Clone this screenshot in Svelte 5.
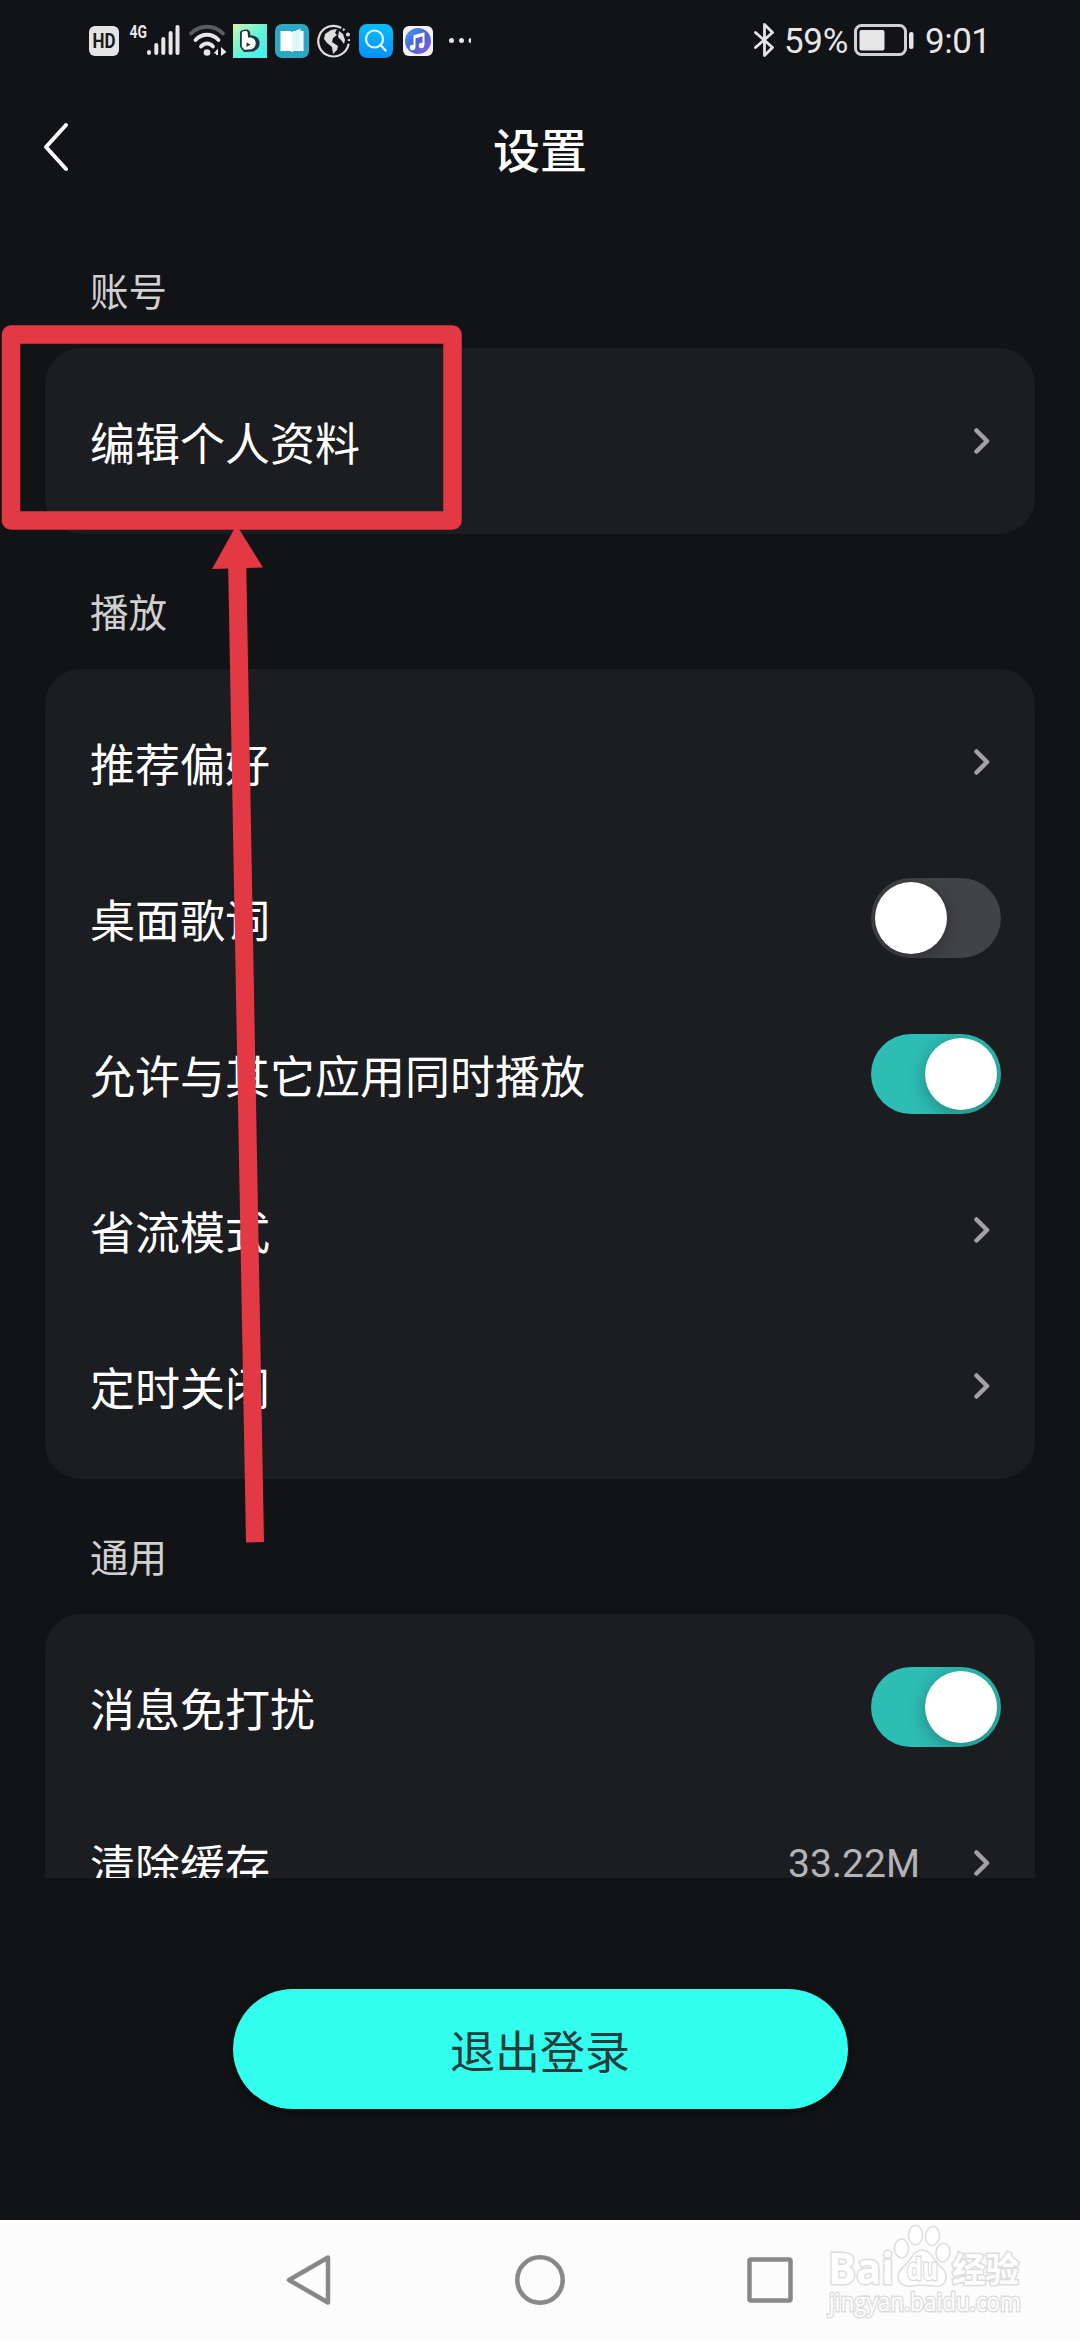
<script lang="ts">
    type Row = { label: string; kind: "link" | "switch"; on?: boolean; value?: string };
    type Section = { title: string; rows: Row[] };

    let sections: Section[] = [
        {
            title: "账号",
            rows: [{ label: "编辑个人资料", kind: "link" }],
        },
        {
            title: "播放",
            rows: [
                { label: "推荐偏好", kind: "link" },
                { label: "桌面歌词", kind: "switch", on: false },
                { label: "允许与其它应用同时播放", kind: "switch", on: true },
                { label: "省流模式", kind: "link" },
                { label: "定时关闭", kind: "link" },
            ],
        },
        {
            title: "通用",
            rows: [
                { label: "消息免打扰", kind: "switch", on: true },
                { label: "清除缓存", kind: "link", value: "33.22M" },
            ],
        },
    ];

    function toggle(row: Row) {
        row.on = !row.on;
        sections = sections;
    }
</script>

<div class="screen">
    <div class="statusBar">
        <svg class="statusIcons" width="400" height="40" viewBox="80 20 400 40">
            <defs>
                <linearGradient id="mint" x1="0" y1="0" x2="1" y2="1">
                    <stop offset="0" stop-color="#d3f6ac" />
                    <stop offset="0.5" stop-color="#66f3d8" />
                    <stop offset="1" stop-color="#3deef0" />
                </linearGradient>
                <linearGradient id="sky" x1="0" y1="0" x2="0" y2="1">
                    <stop offset="0" stop-color="#08bdfb" />
                    <stop offset="1" stop-color="#0a8ff8" />
                </linearGradient>
                <linearGradient id="violet" x1="0" y1="0" x2="1" y2="1">
                    <stop offset="0" stop-color="#4aa0ee" />
                    <stop offset="0.5" stop-color="#4a63d8" />
                    <stop offset="1" stop-color="#8d63dc" />
                </linearGradient>
            </defs>

            <!-- HD voice -->
            <rect x="89" y="26" width="30" height="30" rx="6" fill="#e4e4e4" />
            <text x="104" y="48" class="hd" text-anchor="middle" textLength="23" lengthAdjust="spacingAndGlyphs">HD</text>

            <!-- signal -->
            <text x="129.5" y="38" class="gen" textLength="17.5" lengthAdjust="spacingAndGlyphs">4G</text>
            <path d="M149 52v1M156.300 45v8M163.300 39v14M170.600 33v20M177.500 27v26" stroke="#e6e6e6" stroke-width="4" stroke-linecap="round" />

            <!-- wifi -->
            <g fill="none" stroke-linecap="round" stroke-width="3.800">
                <path d="M191 33.500C200 24.500 214 24.500 223 33.500" stroke="#5b5c5e" />
                <path d="M195.500 40C202 33 212 33 218.500 40" stroke="#e6e6e6" />
                <path d="M201 46.500C204.500 42.500 209.500 42.500 213 46.500" stroke="#e6e6e6" />
            </g>
            <circle cx="207" cy="52.500" r="3.300" fill="#e6e6e6" />
            <path d="M213.500 53.500l4.500-5v6.500h-2v-1.500zM221 47l5.500 5-5.500 4z" fill="#e6e6e6" />

            <!-- running apps -->
            <rect x="233" y="24" width="34" height="34" fill="url(#mint)" />
            <path d="M243.500 33.500l3-.5 1 5.500 5 .5c5 1.500 4.500 7.500 0 9l-7 .5-2-3z" fill="#1c3540" stroke="#1c3540" stroke-width="7" stroke-linejoin="round" />
            <path d="M243.500 33l2.500-.3.500 6.300 4.500.3c4 1 4 7 0 8.200l-6 .5-1.500-2z" fill="#fff" stroke="#fff" stroke-width="3.400" stroke-linejoin="round" />
            <path d="M246.500 42.500l4 2-4 2.500z" fill="#1c3540" />

            <rect x="275" y="24" width="34" height="34" rx="7" fill="#2ba8c4" />
            <path d="M280.500 31h10l1.500 1 1.500-1h10v20h-10l-1.500 1-1.500-1h-10z" fill="#fff" />
            <path d="M292 32.500l8.500-4V48l-8.500 4z" fill="#dff8f7" />

            <g fill="none" stroke="#dedede" stroke-width="2.200">
                <path d="M340.500 27.500a15.300 15.300 0 1 0 8 17" stroke-linecap="round" />
                <path d="M343 29a15 15 0 0 1 6 12" stroke-dasharray="2 4" />
            </g>
            <path d="M325 34l6-4 6-1-2 4 2 2-4 3-1 4 6 4-1 4-4 4-1-7-5-4-3-4z" fill="#dedede" />
            <path d="M339 31l4 3 2 6-1 4-3-4-3-3z" fill="#dedede" />
            <circle cx="348" cy="34.500" r="2" fill="#dedede" />

            <rect x="359" y="24" width="34" height="34" rx="8" fill="url(#sky)" />
            <circle cx="374.500" cy="39" r="8.500" fill="none" stroke="#e6fbff" stroke-width="2.200" />
            <path d="M380.500 45l5 5.500" stroke="#e6fbff" stroke-width="2.400" stroke-linecap="round" />

            <rect x="403" y="26" width="30" height="30" rx="6" fill="#f7f3fc" />
            <circle cx="418" cy="41" r="13" fill="url(#violet)" />
            <path d="M414.500 47.500V36l9-2.500V45" fill="none" stroke="#fff" stroke-width="2" />
            <path d="M414.500 37l9-2.500" stroke="#fff" stroke-width="3" />
            <circle cx="412.500" cy="47.500" r="2.700" fill="#fff" />
            <circle cx="421.500" cy="45.500" r="2.700" fill="#fff" />

            <circle cx="451.500" cy="40.500" r="2.500" fill="#e6e6e6" />
            <circle cx="461.500" cy="40.500" r="2.500" fill="#e6e6e6" />
            <path d="M471 38a2.500 2.500 0 0 0 0 5z" fill="#e6e6e6" />
        </svg>

        <div class="statusRight">
            <svg width="24" height="36" viewBox="0 0 24 36">
                <path d="M2.500 10.500l17 15-8 8V2.500l8 8-17 15" fill="none" stroke="#e6e6e6" stroke-width="2.800" stroke-linejoin="round" stroke-linecap="round" />
            </svg>
            <span class="percent">59%</span>
            <svg width="60" height="32" viewBox="0 0 60 32">
                <rect x="1.500" y="1.500" width="50" height="29" rx="6" fill="none" stroke="#d2d0d2" stroke-width="3" />
                <rect x="5.500" y="6" width="25" height="20.500" rx="2" fill="#e6e6e6" />
                <rect x="55" y="8" width="4.500" height="17" rx="2" fill="#e6e6e6" />
            </svg>
            <span class="clock">9:01</span>
        </div>
    </div>

    <header>
        <svg class="back" width="30" height="54" viewBox="0 0 30 54">
            <path d="M25 5L5 27l20 22" fill="none" stroke="#fff" stroke-width="4" stroke-linecap="round" stroke-linejoin="round" />
        </svg>
        <h1>设置</h1>
    </header>

    <main>
        {#each sections as section}
            <h2>{section.title}</h2>
            <div class="card">
                {#each section.rows as row}
                    <div class="row">
                        <span class="label">{row.label}</span>
                        {#if row.kind === "switch"}
                            <button class="switch" class:on={row.on} aria-label={row.label} on:click={() => toggle(row)}>
                                <span class="knob"></span>
                            </button>
                        {:else}
                            {#if row.value}
                                <span class="value">{row.value}</span>
                            {/if}
                            <svg class="chevron" width="16" height="28" viewBox="0 0 16 28">
                                <path d="M2.500 3.500L13 14 2.500 24.500" fill="none" stroke="#a2a2a4" stroke-width="4.500" stroke-linecap="round" stroke-linejoin="round" />
                            </svg>
                        {/if}
                    </div>
                {/each}
            </div>
        {/each}
    </main>

    <footer>
        <button class="logout">退出登录</button>
    </footer>

    <nav>
        <svg width="50" height="56" viewBox="0 0 50 56">
            <path d="M44 5.500v45L5 28z" fill="none" stroke="#888" stroke-width="4.500" stroke-linejoin="round" />
        </svg>
        <svg width="56" height="56" viewBox="0 0 56 56">
            <circle cx="28" cy="28" r="22.700" fill="none" stroke="#888" stroke-width="4.500" />
        </svg>
        <svg width="50" height="56" viewBox="0 0 50 56">
            <rect x="3.500" y="7.500" width="41" height="41" rx="1.500" fill="none" stroke="#888" stroke-width="4.500" />
        </svg>
    </nav>

    <!-- highlight box and arrow over the profile row -->
    <svg class="marks" width="1080" height="2340" viewBox="0 0 1080 2340">
        <rect x="11" y="334.500" width="441.500" height="186" fill="none" stroke="#e23945" stroke-width="18.500" stroke-linejoin="round" />
        <path d="M236.500 525L263 567.500 246.300 568 264 1542l-18 .5L228.200 568.500 212 569z" fill="#e23945" />
    </svg>

    <svg class="watermark" width="260" height="120" viewBox="820 2220 260 120">
        <g fill="#fff" stroke="#dcdcdc" stroke-width="1.500">
            <ellipse cx="901.500" cy="2248.500" rx="7" ry="9.500" />
            <ellipse cx="915.500" cy="2235" rx="7" ry="9.800" />
            <ellipse cx="932.500" cy="2236" rx="7" ry="9.500" transform="rotate(8 932.500 2236)" />
            <ellipse cx="943" cy="2252.500" rx="7" ry="9.300" transform="rotate(8 943 2252.500)" />
            <path d="M922 2250c7 0 10 6 14 12 5 6 11 9 10 16-1 8-8 9-13 8-7-1-15-1-22 0-7 1-13-3-13-9 0-7 6-10 11-16 4-6 7-11 13-11z" />
            <text x="828" y="2284" class="brand" textLength="66" lengthAdjust="spacingAndGlyphs">Bai</text>
            <text x="907" y="2280" class="du" textLength="31" lengthAdjust="spacingAndGlyphs">du</text>
            <text x="952" y="2282" class="jy" textLength="67" lengthAdjust="spacingAndGlyphs">经验</text>
            <text x="829" y="2311" class="site" textLength="192" lengthAdjust="spacingAndGlyphs">jingyan.baidu.com</text>
        </g>
    </svg>
</div>

<style>
    :global(body) {
        margin: 0;
        background: #121316;
    }

    .screen {
        position: relative;
        display: flex;
        flex-direction: column;
        width: 1080px;
        height: 2340px;
        overflow: hidden;
        background: #121316;
        color: #fff;
        font-family: "Noto Sans CJK SC", sans-serif;
    }

    .statusBar {
        display: flex;
        justify-content: space-between;
        align-items: center;
        height: 80px;
        box-sizing: border-box;
        padding: 0 90px 0 80px;
    }

    .statusIcons {
        display: block;
    }

    .statusRight {
        display: flex;
        align-items: center;
        color: #e6e6e6;
        font-family: Roboto, sans-serif;
        font-size: 35px;
        line-height: 40px;
    }

    .percent {
        width: 64px;
        margin: 4px 6px 0 7px;
        letter-spacing: -0.3px;
    }

    .clock {
        margin: 4px 0 0 11px;
        width: 65px;
        letter-spacing: -0.5px;
    }

    .hd {
        font: 700 20px Roboto, sans-serif;
        fill: #18191b;
    }

    .gen {
        font: 700 19px Roboto, sans-serif;
        fill: #e6e6e6;
    }

    header {
        position: relative;
        display: flex;
        align-items: center;
        justify-content: center;
        height: 133px;
    }

    .back {
        position: absolute;
        left: 41px;
        top: 40px;
    }

    h1 {
        margin: 2px 0 0;
        font-size: 47px;
        font-weight: 500;
        line-height: 60px;
    }

    main {
        height: 1665px;
        overflow: hidden;
        padding: 0 45px;
    }

    h2 {
        margin: 0;
        height: 135px;
        box-sizing: border-box;
        padding: 46px 0 0 45px;
        color: #d0d0d1;
        font-size: 38.5px;
        font-weight: 400;
        line-height: 60px;
    }

    .card {
        padding: 15px 34px 15px 45px;
        border-radius: 36px;
        background: #1c1d20;
    }

    .row {
        display: flex;
        align-items: center;
        height: 156px;
    }

    .label {
        flex: 1;
        padding-top: 1px;
        font-size: 45px;
        line-height: 60px;
    }

    .value {
        margin-right: 54px;
        padding-top: 2px;
        color: #b4b4b6;
        font-family: Roboto, sans-serif;
        font-size: 39px;
    }

    .chevron {
        margin-right: 11px;
    }

    .switch {
        display: flex;
        width: 130px;
        height: 80px;
        padding: 4px;
        border: 0;
        border-radius: 40px;
        background: #424346;
        overflow: hidden;
    }

    .switch.on {
        justify-content: flex-end;
        background: #2dbdb4;
    }

    .knob {
        width: 72px;
        height: 72px;
        border-radius: 50%;
        background: #fff;
        box-shadow: 0 4px 18px rgba(0, 0, 0, 0.3);
    }

    footer {
        display: flex;
        justify-content: center;
        align-items: flex-start;
        height: 342px;
        box-sizing: border-box;
        padding-top: 111px;
    }

    .logout {
        width: 615px;
        height: 120px;
        padding-top: 3px;
        border: 0;
        border-radius: 60px;
        background: #33ffee;
        box-shadow: 0 3px 8px rgba(0, 0, 0, 0.5);
        color: #253c3d;
        font-family: inherit;
        font-size: 45px;
        line-height: 60px;
    }

    nav {
        display: flex;
        align-items: center;
        gap: 178px;
        height: 120px;
        padding-left: 284px;
        background: #fcfcfc;
    }

    .marks {
        position: absolute;
        left: 0;
        top: 0;
        pointer-events: none;
    }

    .watermark {
        position: absolute;
        left: 820px;
        top: 2220px;
        pointer-events: none;
    }

    .brand,
    .du,
    .jy,
    .site {
        paint-order: stroke;
        stroke-width: 3px;
    }

    .brand {
        font: 700 43px "Open Sans", sans-serif;
    }

    .du {
        font: 700 30px "Open Sans", sans-serif;
    }

    .jy {
        font: 700 34px "Noto Sans CJK SC", sans-serif;
    }

    .site {
        font: 400 25px "Open Sans", sans-serif;
    }
</style>
